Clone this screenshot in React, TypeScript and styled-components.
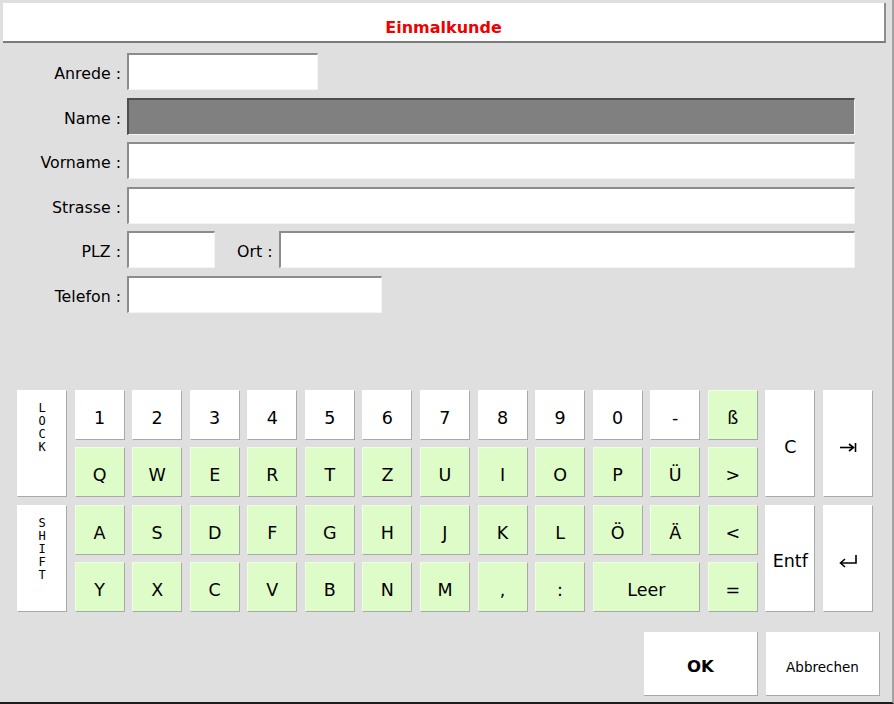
import React from 'react';
import styled, { createGlobalStyle } from 'styled-components';

const GlobalStyle = createGlobalStyle`
  html, body {
    margin: 0;
    padding: 0;
    background: #dfdfdf;
  }
  * {
    box-sizing: border-box;
  }
`;

const Window = styled.div`
  width: 894px;
  height: 704px;
  display: flex;
  flex-direction: column;
  padding: 3px 0 0 3px;
  background: #dfdfdf;
  border-right: 2px solid #a3a3a3;
  border-bottom: 2px solid #1c1c1c;
  font-family: "DejaVu Sans", Verdana, sans-serif;
  color: #000;
  overflow: hidden;
`;

const TitleBar = styled.div`
  width: 883px;
  height: 40px;
  flex: none;
  display: flex;
  align-items: center;
  justify-content: center;
  padding-top: 11px;
  background: #fff;
  border-right: 2px solid #8e8e8e;
  border-bottom: 2px solid #7a7a7a;
  color: #f00000;
  font-weight: bold;
  font-size: 16px;
`;

const Form = styled.div`
  width: 852px;
  margin-top: 10px;
  display: grid;
  grid-template-columns: 118px 1fr;
  grid-auto-rows: 37px;
  column-gap: 6px;
  row-gap: 7.6px;
`;

const Label = styled.div<{ $inline?: boolean }>`
  align-self: center;
  text-align: right;
  font-size: 15.8px;
  padding-top: 4px;
  white-space: nowrap;
  ${(p) => (p.$inline ? 'margin: 0 7px 0 22px;' : '')}
`;

const Field = styled.div<{ $dark?: boolean; $width?: number }>`
  height: 37px;
  width: ${(p) => (p.$width ? `${p.$width}px` : '100%')};
  flex: ${(p) => (p.$width ? 'none' : '1')};
  background: ${(p) => (p.$dark ? '#808080' : '#ffffff')};
  border-top: 2px solid ${(p) => (p.$dark ? '#4e4e4e' : '#8c8c8c')};
  border-left: 2px solid ${(p) => (p.$dark ? '#4e4e4e' : '#8c8c8c')};
  border-right: 1px solid #f4f4f4;
  border-bottom: 1px solid #f4f4f4;
`;

const FieldRow = styled.div`
  display: flex;
  align-items: center;
`;

const Keyboard = styled.div`
  margin: 77px 0 0 14px;
  display: grid;
  grid-template-columns: repeat(15, 50px);
  grid-template-rows: repeat(4, 50px);
  column-gap: 7.57px;
  row-gap: 7.4px;
`;

const Key = styled.div<{ $green?: boolean; $col: number; $row: number; $cspan?: number; $rspan?: number }>`
  grid-column: ${(p) => p.$col} / span ${(p) => p.$cspan ?? 1};
  grid-row: ${(p) => p.$row} / span ${(p) => p.$rspan ?? 1};
  display: flex;
  align-items: center;
  justify-content: center;
  padding-top: 6px;
  background: ${(p) => (p.$green ? '#defcc8' : '#ffffff')};
  border-top: 1px solid ${(p) => (p.$green ? '#eefde4' : '#ffffff')};
  border-left: 1px solid ${(p) => (p.$green ? '#eefde4' : '#ffffff')};
  border-right: 1px solid #a9a9a9;
  border-bottom: 1px solid #a9a9a9;
  font-size: 17.5px;
  user-select: none;
`;

const StackKey = styled(Key)`
  flex-direction: column;
  justify-content: flex-start;
  padding-top: 11px;
  font-family: "DejaVu Sans Mono", monospace;
  font-size: 12px;
  line-height: 13px;
`;

const Footer = styled.div`
  display: flex;
  justify-content: flex-end;
  gap: 8px;
  margin-top: 20px;
  padding-right: 12px;
`;

const DialogButton = styled.div<{ $primary?: boolean }>`
  width: 114px;
  height: 64px;
  display: flex;
  align-items: center;
  justify-content: center;
  padding-top: 6px;
  background: #fff;
  border-right: 1px solid #a9a9a9;
  border-bottom: 1px solid #a9a9a9;
  font-size: ${(p) => (p.$primary ? '16.5px' : '13.5px')};
  font-weight: ${(p) => (p.$primary ? 'bold' : 'normal')};
`;

const TabIcon = () => (
  <svg width="18" height="12" viewBox="0 0 18 12">
    <path d="M1 6.5 H14" stroke="#000" strokeWidth="1.6" fill="none" />
    <path d="M10 3 L14.5 6.5 L10 10" stroke="#000" strokeWidth="1.6" fill="none" />
    <path d="M16.5 2 V11" stroke="#000" strokeWidth="1.6" fill="none" />
  </svg>
);

const ReturnIcon = () => (
  <svg width="20" height="14" viewBox="0 0 20 14">
    <path d="M18 1 V9 H3" stroke="#000" strokeWidth="1.6" fill="none" />
    <path d="M7 5 L2.5 9 L7 13" stroke="#000" strokeWidth="1.6" fill="none" />
  </svg>
);

type KeyDef = { label: string; col: number; row: number; green?: boolean; cspan?: number };

const digits = ['1', '2', '3', '4', '5', '6', '7', '8', '9', '0', '-'];
const row2 = ['Q', 'W', 'E', 'R', 'T', 'Z', 'U', 'I', 'O', 'P', 'Ü', '>'];
const row3 = ['A', 'S', 'D', 'F', 'G', 'H', 'J', 'K', 'L', 'Ö', 'Ä', '<'];
const row4 = ['Y', 'X', 'C', 'V', 'B', 'N', 'M', ',', ':'];

const keys: KeyDef[] = [
  ...digits.map((label, i) => ({ label, col: i + 2, row: 1 })),
  { label: 'ß', col: 13, row: 1, green: true },
  ...row2.map((label, i) => ({ label, col: i + 2, row: 2, green: true })),
  ...row3.map((label, i) => ({ label, col: i + 2, row: 3, green: true })),
  ...row4.map((label, i) => ({ label, col: i + 2, row: 4, green: true })),
  { label: 'Leer', col: 11, row: 4, green: true, cspan: 2 },
  { label: '=', col: 13, row: 4, green: true },
];

const Stack = ({ text }: { text: string }) => (
  <>
    {text.split('').map((c, i) => (
      <span key={i}>{c}</span>
    ))}
  </>
);

export default function App() {
  return (
    <>
      <GlobalStyle />
      <Window>
        <TitleBar>Einmalkunde</TitleBar>

        <Form>
          <Label>Anrede :</Label>
          <Field $width={191} />

          <Label>Name :</Label>
          <Field $dark />

          <Label>Vorname :</Label>
          <Field />

          <Label>Strasse :</Label>
          <Field />

          <Label>PLZ :</Label>
          <FieldRow>
            <Field $width={88} />
            <Label $inline>Ort :</Label>
            <Field />
          </FieldRow>

          <Label>Telefon :</Label>
          <Field $width={255} />
        </Form>

        <Keyboard>
          <StackKey $col={1} $row={1} $rspan={2}>
            <Stack text="LOCK" />
          </StackKey>
          <StackKey $col={1} $row={3} $rspan={2}>
            <Stack text="SHIFT" />
          </StackKey>
          {keys.map((k) => (
            <Key key={`${k.row}-${k.col}`} $col={k.col} $row={k.row} $green={k.green} $cspan={k.cspan}>
              {k.label}
            </Key>
          ))}
          <Key $col={14} $row={1} $rspan={2}>C</Key>
          <Key $col={15} $row={1} $rspan={2}>
            <TabIcon />
          </Key>
          <Key $col={14} $row={3} $rspan={2}>Entf</Key>
          <Key $col={15} $row={3} $rspan={2}>
            <ReturnIcon />
          </Key>
        </Keyboard>

        <Footer>
          <DialogButton $primary>OK</DialogButton>
          <DialogButton>Abbrechen</DialogButton>
        </Footer>
      </Window>
    </>
  );
}
